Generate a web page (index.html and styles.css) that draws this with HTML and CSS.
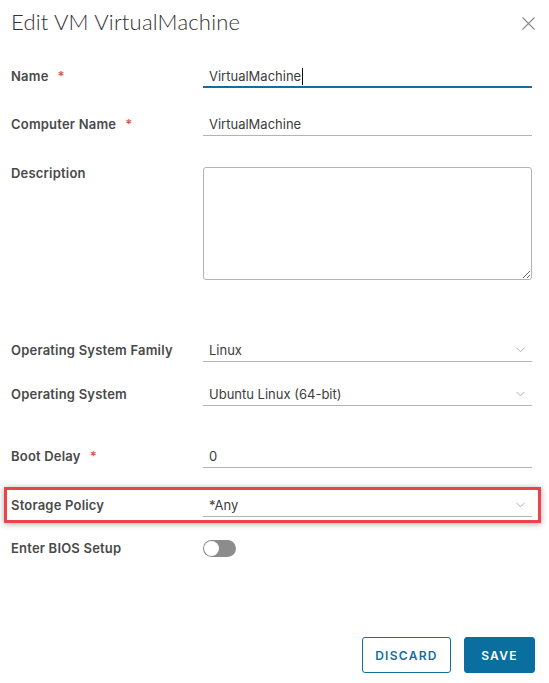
FILE: index.html
```html
<!DOCTYPE html>
<html lang="en">
<head>
<meta charset="utf-8">
<title>Edit VM VirtualMachine</title>
<link rel="stylesheet" href="styles.css">
</head>
<body>
<div class="modal">
  <div class="header">
    <h1 class="title">Edit VM VirtualMachine</h1>
    <button class="close" aria-label="Close">
      <svg width="13" height="13" viewBox="0 0 13 13"><path d="M0.5 0.5L12.5 12.5M12.5 0.5L0.5 12.5" stroke="#8a8a8a" stroke-width="1.1" fill="none"/></svg>
    </button>
  </div>

  <div class="row row-name">
    <div class="label">Name<span class="req">*</span></div>
    <div class="field focused"><span class="val">VirtualMachine</span><span class="caret"></span></div>
  </div>

  <div class="row row-computer">
    <div class="label">Computer Name<span class="req">*</span></div>
    <div class="field"><span class="val">VirtualMachine</span></div>
  </div>

  <div class="row row-desc">
    <div class="label label-top">Description</div>
    <textarea class="textarea"></textarea>
  </div>

  <div class="row row-osfam">
    <div class="label">Operating System Family</div>
    <div class="field select"><span class="val">Linux</span>
      <svg class="chev" width="9" height="6" viewBox="0 0 9 6"><path d="M0.5 0.8L4.5 4.8L8.5 0.8" stroke="#b0b0b0" stroke-width="1" fill="none"/></svg>
    </div>
  </div>

  <div class="row row-os">
    <div class="label">Operating System</div>
    <div class="field select"><span class="val">Ubuntu Linux (64-bit)</span>
      <svg class="chev" width="9" height="6" viewBox="0 0 9 6"><path d="M0.5 0.8L4.5 4.8L8.5 0.8" stroke="#b0b0b0" stroke-width="1" fill="none"/></svg>
    </div>
  </div>

  <div class="row row-boot">
    <div class="label">Boot Delay<span class="req">*</span></div>
    <div class="field"><span class="val">0</span></div>
  </div>

  <div class="highlight">
    <div class="row">
      <div class="label">Storage Policy</div>
      <div class="field select"><span class="val">*Any</span>
        <svg class="chev" width="9" height="6" viewBox="0 0 9 6"><path d="M0.5 0.8L4.5 4.8L8.5 0.8" stroke="#b0b0b0" stroke-width="1" fill="none"/></svg>
      </div>
    </div>
  </div>

  <div class="row row-bios">
    <div class="label">Enter BIOS Setup</div>
    <div class="toggle-wrap"><span class="toggle"><span class="knob"></span></span></div>
  </div>

  <div class="footer">
    <button class="btn btn-outline">DISCARD</button>
    <button class="btn btn-primary">SAVE</button>
  </div>
</div>
</body>
</html>
```

FILE: styles.css
```css
* { box-sizing: border-box; }
html, body { margin: 0; padding: 0; background: #fff; }
body {
  font-family: Inter, "Open Sans", "Liberation Sans", sans-serif;
  color: #454545;
  width: 549px;
  height: 683px;
  overflow: hidden;
}
.modal {
  padding: 8px 17px 0 11px;
  display: flex;
  flex-direction: column;
}
.header {
  display: flex;
  justify-content: space-between;
  align-items: flex-start;
  height: 28px;
  margin-right: -3px;
}
.title {
  margin: 0;
  font-family: Lato, "Open Sans", sans-serif;
  font-size: 22px;
  font-weight: 300;
  line-height: 28px;
  color: #313131;
  letter-spacing: 0.2px;
}
.close {
  border: 0;
  background: none;
  padding: 0;
  margin-top: 9px;
  width: 13px;
  height: 13px;
  display: flex;
}
.row {
  display: grid;
  grid-template-columns: 192px 1fr;
  align-items: start;
}
.label {
  font-size: 13px;
  font-weight: 600;
  line-height: 23px;
  padding-top: 1px;
  letter-spacing: 0.2px;
  color: #4a4a4a;
  white-space: nowrap;
}
.label-top { line-height: 12px; padding-top: 0; }
.req {
  color: #e0524a;
  margin-left: 9px;
  font-weight: 600;
}
.field {
  height: 24px;
  border-bottom: 1px solid #b3b3b3;
  padding-left: 6px;
  padding-top: 1px;
  font-size: 13px;
  line-height: 22px;
  color: #3c3c3c;
  display: flex;
  align-items: flex-start;
}
.field.focused {
  border-bottom: 2px solid #0e6fa0;
}
.caret {
  display: inline-block;
  width: 1px;
  height: 17px;
  background: #111;
  margin-top: 3px;
  margin-left: 1px;
}
.select { position: relative; }
.chev {
  position: absolute;
  right: 7px;
  top: 9px;
}
.row-name { margin-top: 28px; }
.row-computer { margin-top: 24px; }
.row-desc { margin-top: 31px; }
.textarea {
  height: 113px;
  width: 100%;
  border: 1px solid #b3b3b3;
  border-radius: 3px;
  resize: vertical;
  margin: 0;
  display: block;
}
.row-osfam { margin-top: 58px; }
.row-os { margin-top: 20px; }
.row-boot { margin-top: 38px; }
.highlight {
  margin: 19px -9px 0 -7px;
  border: 3px solid #ec424b;
  padding: 3px 6px 3px 4px;
  box-shadow: 0 1px 6px rgba(0, 0, 0, 0.35);
}
.row-bios { margin-top: 13px; }
.toggle-wrap {
  height: 24px;
  display: flex;
  align-items: center;
}
.toggle {
  width: 33px;
  height: 17px;
  border-radius: 9px;
  background: #8c8c8c;
  position: relative;
  display: inline-block;
}
.knob {
  position: absolute;
  left: 1px;
  top: 1px;
  width: 15px;
  height: 15px;
  border-radius: 50%;
  background: #fff;
}
.footer {
  margin-top: 77px;
  margin-right: -3px;
  display: flex;
  justify-content: flex-end;
  gap: 13px;
}
.btn {
  height: 36px;
  border-radius: 3px;
  font-family: Inter, "Open Sans", "Liberation Sans", sans-serif;
  font-size: 12px;
  font-weight: 600;
  letter-spacing: 1.3px;
  padding: 0;
}
.btn-outline {
  width: 89px;
  background: #fff;
  border: 1px solid #0f6fa0;
  color: #0f6fa0;
}
.btn-primary {
  width: 71px;
  background: #0a6e9e;
  border: 1px solid #0a6e9e;
  color: #fff;
}
```
